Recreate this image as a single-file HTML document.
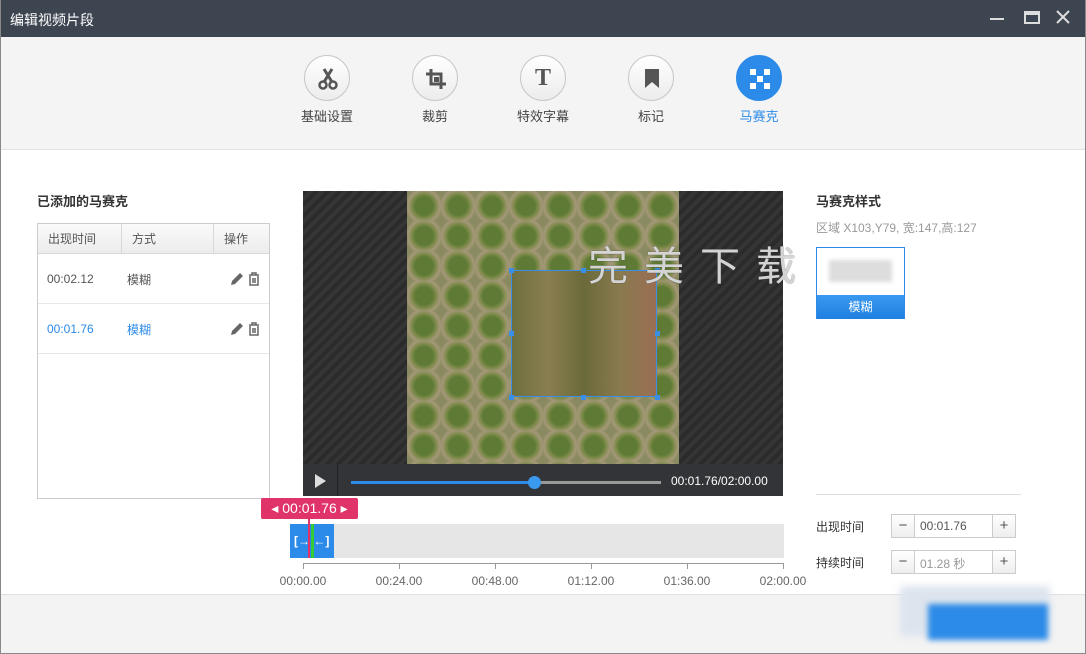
<!DOCTYPE html><html><head><meta charset="utf-8"><style>
*{margin:0;padding:0;box-sizing:border-box}
body{width:1086px;height:654px;overflow:hidden;background:#fff;font-family:"Liberation Sans","Noto Sans CJK SC",sans-serif;font-size:12px;color:#333;position:relative}
.a{position:absolute}
.tb{left:0;top:0;width:1086px;height:37px;background:#3c4550;color:#fff;font-size:14px}
.tool{top:37px;left:1px;width:1084px;height:113px;background:#f4f4f4;border-bottom:1px solid #e2e2e2}
.ic{width:46px;height:46px;border-radius:50%;border:1px solid #c8c8c8;background:linear-gradient(#fff,#ececec);top:18px}
.lb{top:69px;font-size:13px;color:#444;width:80px;text-align:center}
.th{background:linear-gradient(#fafafa,#ececec);border-bottom:1px solid #d8d8d8;height:30px}
.stripe{background:repeating-linear-gradient(135deg,#2b2b2b 0 4px,#353535 4px 8px)}
.tick{top:563px;width:1px;height:6px;background:#999}
.tl{top:574px;font-size:12px;color:#666;width:60px;text-align:center}
.btn{width:24px;height:24px;border:1px solid #ccc;background:linear-gradient(#fff,#eee);text-align:center;line-height:22px;font-size:15px;color:#555}
.h{width:5px;height:5px;background:#3a8ee6}
</style></head><body>
<div class="a tb"><div class="a" style="left:10px;top:10px">编辑视频片段</div>
<div class="a" style="left:990px;top:18px;width:14px;height:2px;background:#ddd"></div>
<div class="a" style="left:1024px;top:11px;width:16px;height:13px;border:2px solid #ddd;border-top-width:4px"></div>
<svg class="a" style="left:1056px;top:10px" width="14" height="14"><path d="M1 1L13 13M13 1L1 13" stroke="#ddd" stroke-width="2"/></svg></div>
<div class="a tool">
<div class="a ic" style="left:303px"><svg class="a" style="left:12px;top:11px" width="22" height="24"><path d="M7 2L15 15M15 2L7 15" stroke="#555" stroke-width="3"/><circle cx="6" cy="18" r="3.5" fill="none" stroke="#555" stroke-width="2.5"/><circle cx="16" cy="18" r="3.5" fill="none" stroke="#555" stroke-width="2.5"/></svg></div>
<div class="a ic" style="left:411px"><svg class="a" style="left:12px;top:12px" width="22" height="22"><path d="M6 1V16H21M1 6H16V21" fill="none" stroke="#555" stroke-width="3"/><rect x="9" y="9" width="5" height="5" fill="#555"/></svg></div>
<div class="a ic" style="left:519px;text-align:center;line-height:44px;font-size:24px;font-weight:bold;color:#555;font-family:'Liberation Serif',serif">T</div>
<div class="a ic" style="left:627px"><svg class="a" style="left:16px;top:13px" width="14" height="20"><path d="M0 0H14V19L7 13L0 19Z" fill="#555"/></svg></div>
<div class="a ic" style="left:735px;background:#2c8be8;border-color:#2c8be8"><svg class="a" style="left:13px;top:13px" width="20" height="20" fill="#fff"><rect x="0" y="0" width="6" height="6"/><rect x="14" y="0" width="6" height="6"/><rect x="7" y="7" width="6" height="6"/><rect x="0" y="14" width="6" height="6"/><rect x="14" y="14" width="6" height="6"/></svg></div>
<div class="a lb" style="left:286px">基础设置</div><div class="a lb" style="left:394px">裁剪</div><div class="a lb" style="left:502px">特效字幕</div><div class="a lb" style="left:610px">标记</div><div class="a lb" style="left:718px;color:#2c8be8">马赛克</div>
</div>
<div class="a" style="left:0;top:0;width:1px;height:654px;background:#888"></div>
<div class="a" style="right:0;top:0;width:1px;height:654px;background:#888"></div>
<div class="a" style="left:37px;top:191px;font-size:13px;font-weight:bold;color:#333">已添加的马赛克</div>
<div class="a" style="left:37px;top:223px;width:233px;height:276px;border:1px solid #ccc">
<div class="th a" style="left:0;top:0;width:231px"></div>
<div class="a" style="left:83px;top:0;width:1px;height:30px;background:#d8d8d8"></div>
<div class="a" style="left:175px;top:0;width:1px;height:30px;background:#d8d8d8"></div>
<div class="a" style="left:10px;top:6px;color:#555">出现时间</div><div class="a" style="left:94px;top:6px;color:#555">方式</div><div class="a" style="left:186px;top:6px;color:#555">操作</div>
<div class="a" style="left:9px;top:48px;color:#555">00:02.12</div><div class="a" style="left:89px;top:47px;color:#555">模糊</div>
<div class="a" style="left:0;top:79px;width:231px;height:1px;background:#e8e8e8"></div>
<div class="a" style="left:9px;top:98px;color:#2c8be8">00:01.76</div><div class="a" style="left:89px;top:97px;color:#2c8be8">模糊</div>
<div class="a" style="left:0;top:129px;width:231px;height:1px;background:#e8e8e8"></div>
<svg class="a" style="left:192px;top:48px" width="32" height="14"><path d="M1 13L2 9L10 1L13 4L5 12Z" fill="#666"/><path d="M19 3H29M22 3V1H26V3M20 4V13H28V4M23 6V11M25 6V11" fill="none" stroke="#666" stroke-width="1.5"/></svg>
<svg class="a" style="left:192px;top:98px" width="32" height="14"><path d="M1 13L2 9L10 1L13 4L5 12Z" fill="#666"/><path d="M19 3H29M22 3V1H26V3M20 4V13H28V4M23 6V11M25 6V11" fill="none" stroke="#666" stroke-width="1.5"/></svg>
</div>
<div class="a stripe" style="left:303px;top:191px;width:480px;height:273px"></div>
<div class="a" style="left:407px;top:191px;width:272px;height:273px;background:radial-gradient(circle,#5e7a35 0 9px,#7d8a4a 12px,#a49878 16px,#8a8a60 19px);background-size:34px 30px"></div>
<div class="a" style="left:511px;top:270px;width:146px;height:127px;background:linear-gradient(90deg,#6e7040,#8a7e50,#6a6a3a,#8a7a50,#9a6e52);border:1px solid #3a8ee6"></div>
<div class="a h" style="left:509px;top:268px"></div><div class="a h" style="left:581px;top:268px"></div><div class="a h" style="left:655px;top:268px"></div>
<div class="a h" style="left:509px;top:331px"></div><div class="a h" style="left:655px;top:331px"></div>
<div class="a h" style="left:509px;top:395px"></div><div class="a h" style="left:581px;top:395px"></div><div class="a h" style="left:655px;top:395px"></div>
<div class="a" style="left:588px;top:234px;font-size:40px;color:rgba(240,240,240,.85);letter-spacing:16px;text-shadow:0 0 1px #333">完美下载</div>
<div class="a" style="left:303px;top:464px;width:480px;height:32px;background:#333437">
<div class="a" style="left:0;top:0;width:35px;height:32px;border-right:1px solid #222"></div>
<svg class="a" style="left:12px;top:10px" width="12" height="14"><path d="M0 0L11 7L0 14Z" fill="#ddd"/></svg>
<div class="a" style="left:48px;top:17px;width:310px;height:3px;background:#999"></div>
<div class="a" style="left:48px;top:17px;width:183px;height:3px;background:#2c8be8"></div>
<div class="a" style="left:225px;top:12px;width:13px;height:13px;border-radius:50%;background:#3a9af0"></div>
<div class="a" style="left:368px;top:10px;color:#fff;font-size:12px">00:01.76/02:00.00</div></div>
<div class="a" style="left:261px;top:498px;width:97px;height:21px;background:#e0336a;border-radius:2px;color:#fff;font-size:14px;text-align:center;line-height:21px">◂ 00:01.76 ▸</div>
<div class="a" style="left:303px;top:524px;width:481px;height:34px;background:#e6e6e6"></div>
<div class="a" style="left:290px;top:524px;width:44px;height:34px;background:#2c8be8;color:#fff;font-weight:bold;font-size:12px;line-height:34px;padding-left:4px">[→ ←]</div>
<div class="a" style="left:308px;top:518px;width:2px;height:40px;background:#e0336a"></div>
<div class="a" style="left:311px;top:524px;width:3px;height:34px;background:#3c3"></div>
<div class="a" style="left:303px;top:563px;width:481px;height:1px;background:#999"></div>
<div class="a tick" style="left:303px"></div><div class="a tick" style="left:399px"></div><div class="a tick" style="left:495px"></div><div class="a tick" style="left:591px"></div><div class="a tick" style="left:687px"></div><div class="a tick" style="left:783px"></div>
<div class="a tl" style="left:273px">00:00.00</div><div class="a tl" style="left:369px">00:24.00</div><div class="a tl" style="left:465px">00:48.00</div><div class="a tl" style="left:561px">01:12.00</div><div class="a tl" style="left:657px">01:36.00</div><div class="a tl" style="left:753px">02:00.00</div>
<div class="a" style="left:816px;top:191px;font-size:13px;font-weight:bold">马赛克样式</div>
<div class="a" style="left:816px;top:219px;color:#999">区域 X103,Y79, 宽:147,高:127</div>
<div class="a" style="left:816px;top:247px;width:89px;height:72px;border:1px solid #2c8be8;background:#fff">
<div class="a" style="left:12px;top:12px;width:63px;height:22px;background:#ddd;filter:blur(2px)"></div>
<div class="a" style="left:0;top:47px;width:87px;height:24px;background:linear-gradient(#3a9af0,#1f7fe0);color:#fff;text-align:center;line-height:24px">模糊</div></div>
<div class="a" style="left:816px;top:494px;width:205px;height:1px;background:#ddd"></div>
<div class="a" style="left:816px;top:518px">出现时间</div><div class="a" style="left:816px;top:554px">持续时间</div>
<div class="a btn" style="left:891px;top:514px">−</div><div class="a" style="left:914px;top:514px;width:79px;height:24px;border:1px solid #ccc;padding:4px 5px;color:#555">00:01.76</div><div class="a btn" style="left:992px;top:514px">+</div>
<div class="a btn" style="left:891px;top:550px">−</div><div class="a" style="left:914px;top:550px;width:79px;height:24px;border:1px solid #ccc;padding:4px 5px;color:#999">01.28 秒</div><div class="a btn" style="left:992px;top:550px">+</div>
<div class="a" style="left:1px;top:594px;width:1084px;height:59px;background:#f3f3f3;border-top:1px solid #e0e0e0"></div>
<div class="a" style="left:900px;top:586px;width:150px;height:50px;background:#dde4ee;filter:blur(4px)"></div>
<div class="a" style="left:928px;top:604px;width:120px;height:36px;background:#2c8be8;filter:blur(3px)"></div>
<div class="a" style="left:0;top:653px;width:1086px;height:1px;background:#888"></div>
</body></html>
